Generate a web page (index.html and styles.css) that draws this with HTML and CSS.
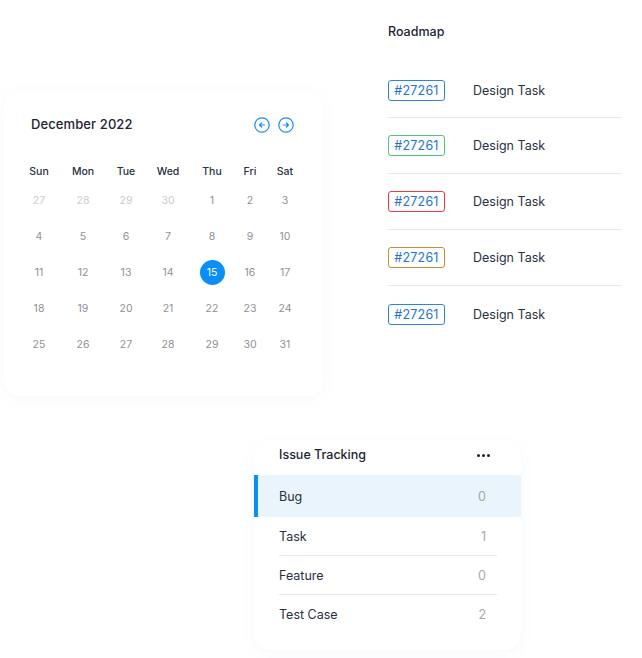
FILE: index.html
```html
<!DOCTYPE html>
<html>
<head>
<meta charset="utf-8">
<link rel="stylesheet" href="styles.css">
</head>
<body>
<div class="canvas">
  <div class="top">
    <section class="card calendar">
      <div class="cal-head">
        <h2 class="cal-title">December 2022</h2>
        <div class="cal-nav">
          <svg class="nav-btn" viewBox="0 0 16 16"><circle cx="8" cy="8" r="7.2"/><path d="M10.6 8H5.6M7.6 6L5.6 8L7.6 10"/></svg>
          <svg class="nav-btn" viewBox="0 0 16 16"><circle cx="8" cy="8" r="7.2"/><path d="M5.4 8H10.4M8.4 6L10.4 8L8.4 10"/></svg>
        </div>
      </div>
      <div class="cal-grid">
        <span class="wd">Sun</span><span class="wd">Mon</span><span class="wd">Tue</span><span class="wd">Wed</span><span class="wd">Thu</span><span class="wd">Fri</span><span class="wd">Sat</span>
        <span class="d muted">27</span><span class="d muted">28</span><span class="d muted">29</span><span class="d muted">30</span><span class="d">1</span><span class="d">2</span><span class="d">3</span>
        <span class="d">4</span><span class="d">5</span><span class="d">6</span><span class="d">7</span><span class="d">8</span><span class="d">9</span><span class="d">10</span>
        <span class="d">11</span><span class="d">12</span><span class="d">13</span><span class="d">14</span><span class="d"><span class="today">15</span></span><span class="d">16</span><span class="d">17</span>
        <span class="d">18</span><span class="d">19</span><span class="d">20</span><span class="d">21</span><span class="d">22</span><span class="d">23</span><span class="d">24</span>
        <span class="d">25</span><span class="d">26</span><span class="d">27</span><span class="d">28</span><span class="d">29</span><span class="d">30</span><span class="d">31</span>
      </div>
    </section>

    <section class="roadmap">
      <h2 class="rm-title">Roadmap</h2>
      <ul class="rm-list">
        <li class="rm-row"><span class="badge b-blue">#27261</span><span class="rm-name">Design Task</span></li>
        <li class="rm-row"><span class="badge b-green">#27261</span><span class="rm-name">Design Task</span></li>
        <li class="rm-row"><span class="badge b-red">#27261</span><span class="rm-name">Design Task</span></li>
        <li class="rm-row"><span class="badge b-gold">#27261</span><span class="rm-name">Design Task</span></li>
        <li class="rm-row"><span class="badge b-blue">#27261</span><span class="rm-name">Design Task</span></li>
      </ul>
    </section>
  </div>

  <section class="card issues">
    <div class="is-head">
      <h2 class="is-title">Issue Tracking</h2>
      <span class="dots"><i></i><i></i><i></i></span>
    </div>
    <ul class="is-list">
      <li class="is-row active"><span>Bug</span><span class="cnt">0</span></li>
      <li class="is-row"><span>Task</span><span class="cnt">1</span></li>
      <li class="is-row"><span>Feature</span><span class="cnt">0</span></li>
      <li class="is-row last"><span>Test Case</span><span class="cnt">2</span></li>
    </ul>
  </section>
</div>
</body>
</html>
```

FILE: styles.css
```css
* { box-sizing: border-box; }
html, body { margin: 0; padding: 0; background: #fff; }
body {
  width: 642px;
  height: 658px;
  overflow: hidden;
  font-family: Inter, "Open Sans", "Liberation Sans", sans-serif;
  color: #1e2335;
}
h2 { margin: 0; font-weight: 500; }
ul { margin: 0; padding: 0; list-style: none; }

.canvas { display: flex; flex-direction: column; }
.top { display: flex; align-items: flex-start; }

.card {
  background: #fff;
  border-radius: 16px;
  box-shadow: 0 4px 16px rgba(40, 110, 200, 0.045), 0 0 1px rgba(40, 110, 200, 0.05);
}

/* Calendar */
.calendar {
  margin-top: 90px;
  margin-left: 4px;
  width: 319px;
  height: 306px;
  padding: 26px 29px 0 13px;
}
.cal-head {
  display: flex;
  align-items: center;
  justify-content: space-between;
  padding-left: 14px;
  height: 16px;
}
.cal-title { font-size: 13px; line-height: 16px; letter-spacing: 0.1px; }
.cal-nav { display: flex; gap: 8px; margin-top: 2px; }
.nav-btn { width: 16px; height: 16px; fill: none; stroke: #1b8cf5; stroke-width: 1.2; stroke-linecap: round; stroke-linejoin: round; }

.cal-grid {
  margin-top: 28px;
  display: grid;
  grid-template-columns: 44px 44px 42px 42px 46px 30px 40px;
  grid-template-rows: 22px repeat(5, 36px);
  align-items: center;
  justify-items: center;
}
.wd { font-size: 10.5px; font-weight: 500; color: #2a2f42; }
.d { font-size: 10.5px; color: #909098; display: flex; align-items: center; justify-content: center; }
.d.muted { color: #cbcbd0; }
.today {
  width: 25px; height: 25px; border-radius: 50%;
  background: #0a8ff7; color: #fff;
  display: flex; align-items: center; justify-content: center;
}

/* Roadmap */
.roadmap {
  margin-left: 47px;
  width: 272px;
  padding: 24px 21px 0 18px;
}
.rm-title { font-size: 12.5px; line-height: 16px; }
.rm-list { margin-top: 24px; }
.rm-row {
  height: 56px;
  display: flex;
  align-items: center;
  border-bottom: 1px solid #e8e8ea;
}
.rm-row:first-child { height: 54px; }
.rm-row:last-child { border-bottom: none; }
.badge {
  width: 57px; height: 21px;
  border: 1px solid;
  border-radius: 3px;
  font-size: 12.5px;
  color: #1d74d6;
  display: flex; align-items: center; justify-content: center;
  letter-spacing: 0.2px;
}
.b-blue { border-color: #2e83e3; }
.b-green { border-color: #4fc47c; }
.b-red { border-color: #f23a44; }
.b-gold { border-color: #c48f2e; }
.rm-name { margin-left: 28px; font-size: 12.5px; color: #2a2f42; }

/* Issues */
.issues {
  margin-top: 44px;
  margin-left: 254px;
  width: 267px;
  height: 210px;
  padding: 0 0 16px 0;
}
.is-head {
  height: 35px;
  padding: 0 31px 7px 25px;
  display: flex;
  align-items: center;
  justify-content: space-between;
}
.is-title { font-size: 12.5px; }
.dots { display: flex; gap: 2px; margin-top: 2px; }
.dots i { width: 3px; height: 3px; border-radius: 50%; background: #1e2335; }
.is-row {
  margin: 0 24px 0 25px;
  height: 39px;
  display: flex;
  align-items: center;
  justify-content: space-between;
  padding-right: 11px;
  font-size: 12.5px;
  color: #2a2f42;
  border-bottom: 1px solid #e8e8ea;
}
.is-row.active {
  margin: 0;
  height: 42px;
  padding-left: 21px;
  padding-right: 35px;
  background: #eaf4fd;
  border-left: 4px solid #0a8ff7;
  border-bottom: none;
}
.is-row.last { border-bottom: none; }
.cnt { color: #a8a8b0; }
```
